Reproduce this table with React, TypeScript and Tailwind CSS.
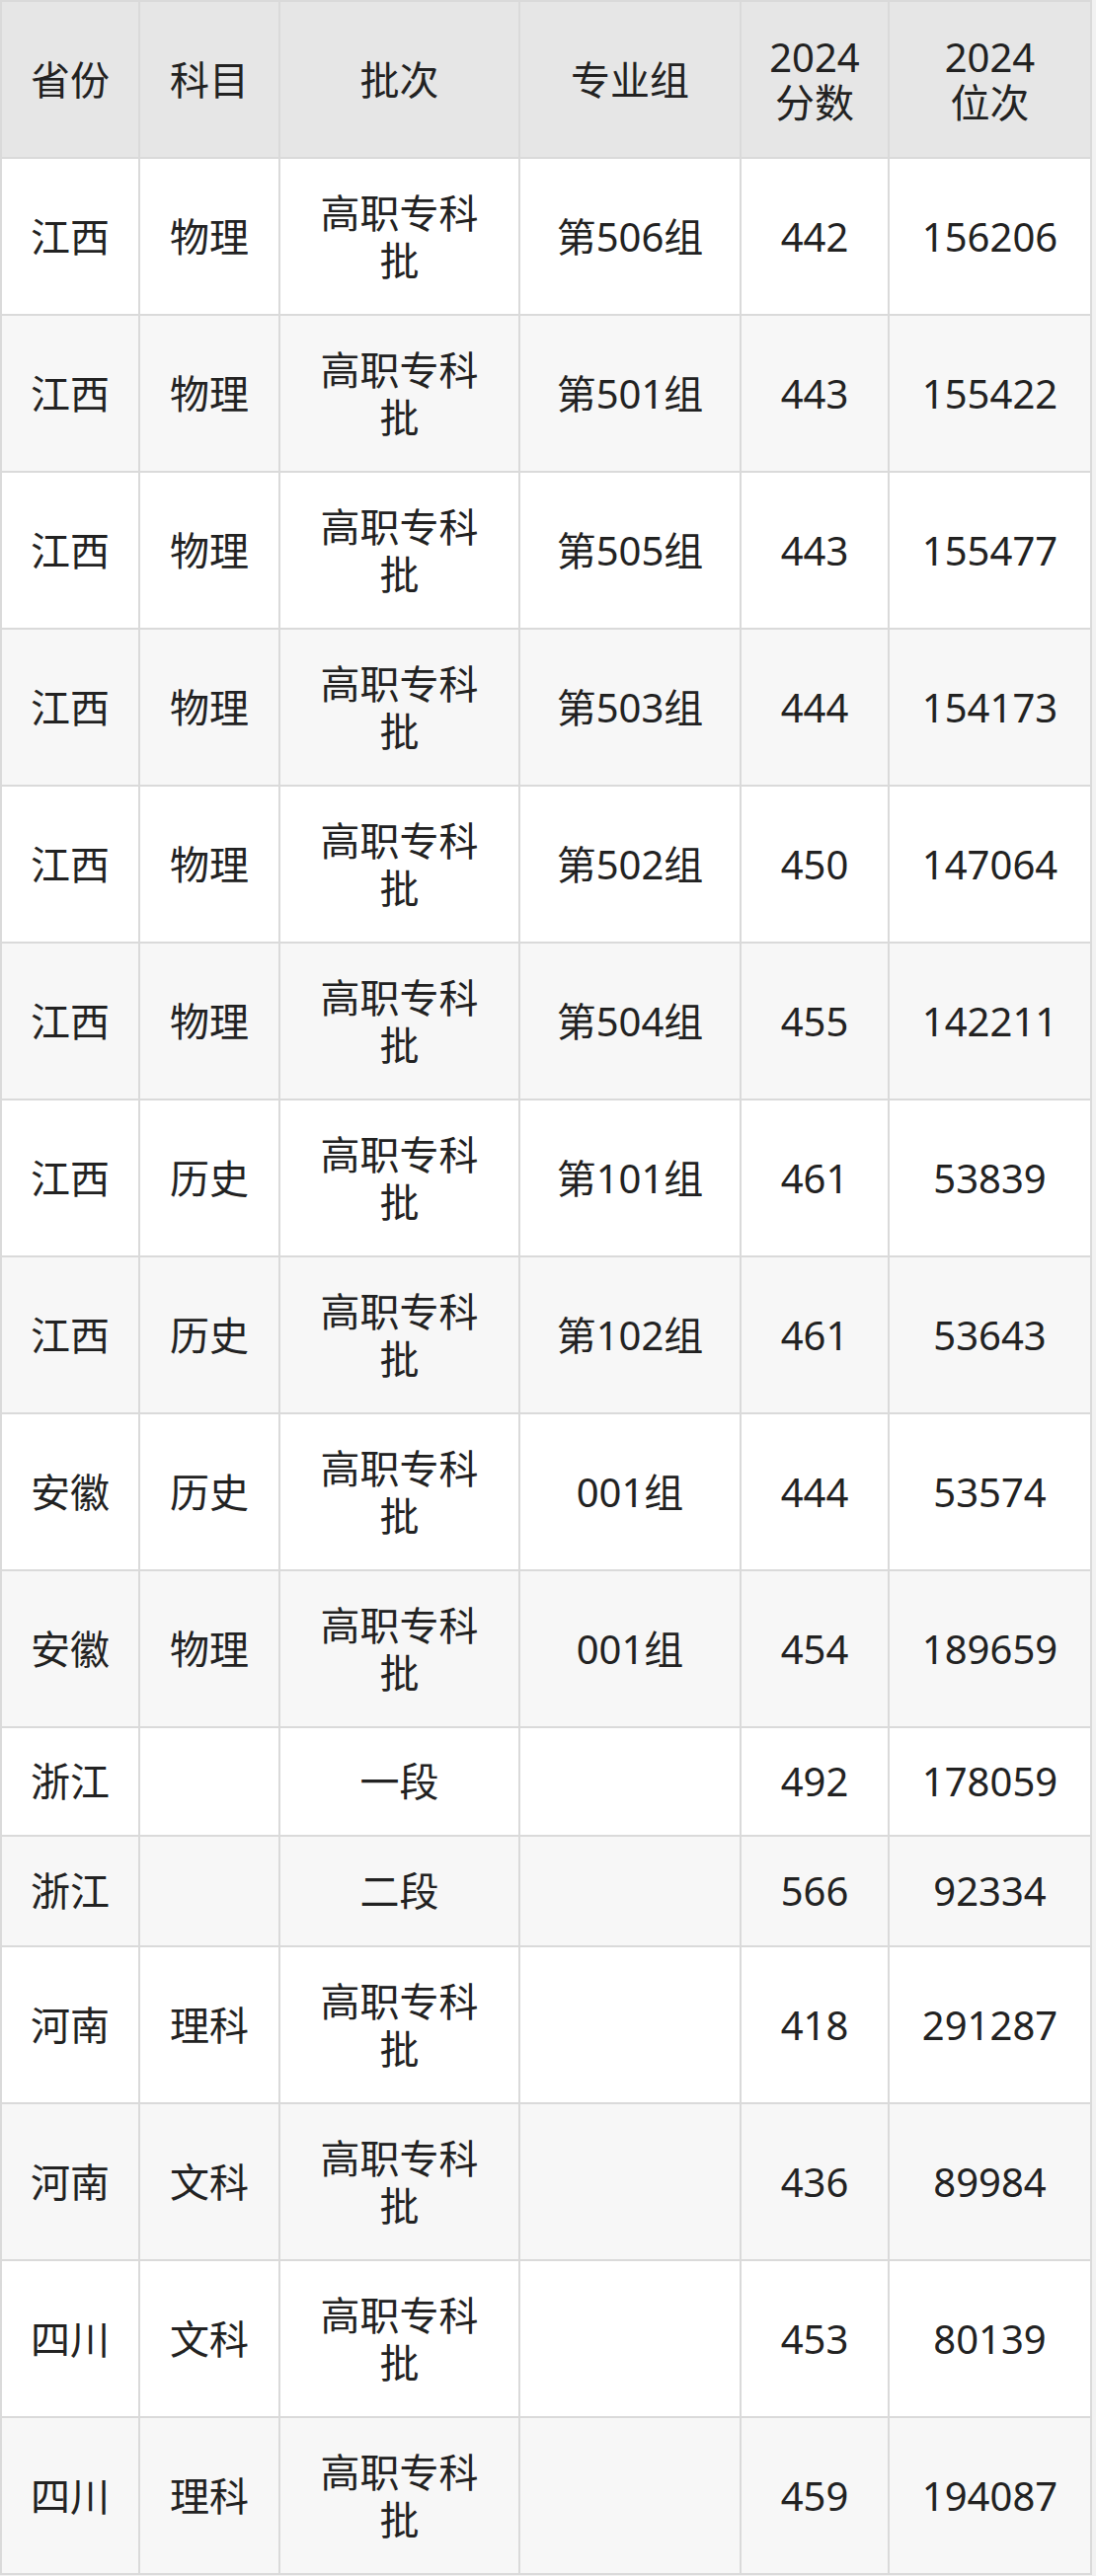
type Row = [string, string, string, string, string, string];

const headers: string[][] = [
  ['省份'],
  ['科目'],
  ['批次'],
  ['专业组'],
  ['2024', '分数'],
  ['2024', '位次'],
];

const rows: Row[] = [
  ['江西', '物理', '高职专科批', '第506组', '442', '156206'],
  ['江西', '物理', '高职专科批', '第501组', '443', '155422'],
  ['江西', '物理', '高职专科批', '第505组', '443', '155477'],
  ['江西', '物理', '高职专科批', '第503组', '444', '154173'],
  ['江西', '物理', '高职专科批', '第502组', '450', '147064'],
  ['江西', '物理', '高职专科批', '第504组', '455', '142211'],
  ['江西', '历史', '高职专科批', '第101组', '461', '53839'],
  ['江西', '历史', '高职专科批', '第102组', '461', '53643'],
  ['安徽', '历史', '高职专科批', '001组', '444', '53574'],
  ['安徽', '物理', '高职专科批', '001组', '454', '189659'],
  ['浙江', '', '一段', '', '492', '178059'],
  ['浙江', '', '二段', '', '566', '92334'],
  ['河南', '理科', '高职专科批', '', '418', '291287'],
  ['河南', '文科', '高职专科批', '', '436', '89984'],
  ['四川', '文科', '高职专科批', '', '453', '80139'],
  ['四川', '理科', '高职专科批', '', '459', '194087'],
];

const cell = 'flex items-center justify-center text-center px-6';

export default function App() {
  return (
    <div
      className="min-h-[2610px] w-[1110px] bg-[#f2f2f2] text-[40px] leading-[48px] text-[#222222]"
      style={{ fontFamily: '"Noto Sans", "Noto Sans CJK SC", sans-serif' }}
    >
      <div className="grid w-[1106px] grid-cols-[138px_140px_241px_222px_148px_203px] gap-[2px] border-2 border-[#dadada] bg-[#dadada]">
        {headers.map((h, i) => (
          <div key={i} className={`${cell} h-[157px] flex-col bg-[#e6e6e6]`}>
            {h.map(line => (
              <span key={line} className="leading-[46px]">
                {line}
              </span>
            ))}
          </div>
        ))}
        {rows.map((r, ri) => {
          const short = r[2].length <= 2;
          const bg = ri % 2 === 0 ? 'bg-white' : 'bg-[#f7f7f7]';
          const h = short ? (ri === 10 ? 'h-[108px]' : 'h-[110px]') : 'h-[157px]';
          return r.map((v, ci) => (
            <div key={`${ri}-${ci}`} className={`${cell} ${h} ${bg}`}>
              {v}
            </div>
          ));
        })}
      </div>
    </div>
  );
}
